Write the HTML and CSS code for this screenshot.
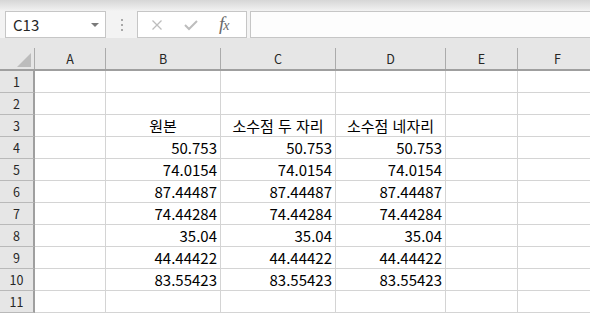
FILE: index.html
```html
<!DOCTYPE html>
<html lang="ko">
<head>
  <meta charset="UTF-8">
  <title>Sheet1</title>
  <link rel="stylesheet" href="styles.css">
</head>
<body>

  <!-- FORMULA BAR -->
  <div class="toolbar">
    <div class="name-box">
      <span>C13</span>
      <span class="drop"></span>
    </div>
    <div class="grip"><i></i><i></i><i></i></div>
    <div class="fx-box">
      <svg class="btn" width="12" height="12" viewBox="0 0 12 12"><path d="M1.5 1.5 L10.5 10.5 M10.5 1.5 L1.5 10.5" stroke="#bdbdbd" stroke-width="1.3" fill="none"/></svg>
      <svg class="btn" width="14" height="12" viewBox="0 0 14 12"><path d="M1 6 L5 10 L13 2" stroke="#bdbdbd" stroke-width="2" fill="none"/></svg>
      <span class="fx">f<small>x</small></span>
    </div>
    <div class="formula"></div>
  </div>

  <!-- SHEET -->
  <div class="sheet">
    <div class="head">
      <div class="corner"><span class="tri"></span></div>
      <div class="col">A</div>
      <div class="col">B</div>
      <div class="col">C</div>
      <div class="col">D</div>
      <div class="col">E</div>
      <div class="col">F</div>
    </div>

    <div class="row"><div class="rh">1</div><div class="c"></div><div class="c"></div><div class="c"></div><div class="c"></div><div class="c"></div><div class="c"></div></div>
    <div class="row"><div class="rh">2</div><div class="c"></div><div class="c"></div><div class="c"></div><div class="c"></div><div class="c"></div><div class="c"></div></div>
    <div class="row"><div class="rh">3</div><div class="c"></div><div class="c mid">원본</div><div class="c mid">소수점 두 자리</div><div class="c mid">소수점 네자리</div><div class="c"></div><div class="c"></div></div>
    <div class="row"><div class="rh">4</div><div class="c"></div><div class="c">50.753</div><div class="c">50.753</div><div class="c">50.753</div><div class="c"></div><div class="c"></div></div>
    <div class="row"><div class="rh">5</div><div class="c"></div><div class="c">74.0154</div><div class="c">74.0154</div><div class="c">74.0154</div><div class="c"></div><div class="c"></div></div>
    <div class="row"><div class="rh">6</div><div class="c"></div><div class="c">87.44487</div><div class="c">87.44487</div><div class="c">87.44487</div><div class="c"></div><div class="c"></div></div>
    <div class="row"><div class="rh">7</div><div class="c"></div><div class="c">74.44284</div><div class="c">74.44284</div><div class="c">74.44284</div><div class="c"></div><div class="c"></div></div>
    <div class="row"><div class="rh">8</div><div class="c"></div><div class="c">35.04</div><div class="c">35.04</div><div class="c">35.04</div><div class="c"></div><div class="c"></div></div>
    <div class="row"><div class="rh">9</div><div class="c"></div><div class="c">44.44422</div><div class="c">44.44422</div><div class="c">44.44422</div><div class="c"></div><div class="c"></div></div>
    <div class="row"><div class="rh">10</div><div class="c"></div><div class="c">83.55423</div><div class="c">83.55423</div><div class="c">83.55423</div><div class="c"></div><div class="c"></div></div>
    <div class="row"><div class="rh">11</div><div class="c"></div><div class="c"></div><div class="c"></div><div class="c"></div><div class="c"></div><div class="c"></div></div>
  </div>

</body>
</html>
```

FILE: styles.css
```css
body {
  margin: 0;
  padding: 0;
  width: 590px;
  height: 313px;
  overflow: hidden;
  background: #ffffff;
  font-family: "Noto Sans CJK KR", "Noto Sans", sans-serif;
  color: #000;
}

/* formula bar */
.toolbar {
  display: flex;
  height: 38px;
  box-sizing: border-box;
  padding: 11px 0 0 5px;
  background: linear-gradient(#d6d6d6 0, #ededed 9px, #f3f3f3 11px);
}

.name-box {
  width: 101px;
  height: 27px;
  box-sizing: border-box;
  border: 1px solid #c6c6c6;
  background: #fff;
  display: flex;
  align-items: center;
  justify-content: space-between;
  padding: 0 6px 0 7px;
  font-size: 15px;
  color: #262626;
}

.drop {
  width: 0;
  height: 0;
  border-left: 4px solid transparent;
  border-right: 4px solid transparent;
  border-top: 4px solid #7a7a7a;
}

.grip {
  width: 31px;
  display: flex;
  flex-direction: column;
  align-items: center;
  justify-content: center;
  gap: 3px;
}

.grip i {
  width: 2px;
  height: 2px;
  background: #a8a8a8;
}

.fx-box {
  width: 110px;
  height: 27px;
  box-sizing: border-box;
  border: 1px solid #c6c6c6;
  background: #fff;
  display: flex;
  align-items: center;
  padding-left: 13px;
  gap: 21px;
}

.fx {
  font-family: "Liberation Serif", serif;
  font-style: italic;
  font-size: 19px;
  line-height: 19px;
  color: #6a6a6a;
  letter-spacing: -1px;
}

.fx small {
  font-size: 14px;
}

.formula {
  flex: 1;
  height: 27px;
  box-sizing: border-box;
  margin-left: 3px;
  margin-right: -4px;
  border: 1px solid #c6c6c6;
  background: #fdfdfd;
}

/* grid */
.head, .row {
  display: grid;
  grid-template-columns: 35px 71px 115px 115px 110px 72px 80px;
}

.head {
  background: #e6e6e6;
  padding-top: 10px;
  border-bottom: 2px solid #9f9f9f;
}

.corner {
  height: 21px;
  box-sizing: border-box;
  border-right: 1px solid #ababab;
  display: flex;
  align-items: flex-end;
  justify-content: flex-end;
  padding: 0 3px 2px 0;
}

.tri {
  width: 0;
  height: 0;
  border-left: 14px solid transparent;
  border-bottom: 14px solid #bcbcbc;
}

.col {
  height: 21px;
  border-right: 1px solid #ababab;
  display: flex;
  align-items: center;
  justify-content: center;
  font-size: 12.5px;
  color: #262626;
}

.rh {
  background: #e6e6e6;
  border-right: 2px solid #9f9f9f;
  border-bottom: 1px solid #b9b9b9;
  display: flex;
  align-items: center;
  justify-content: center;
  font-size: 12.5px;
  color: #262626;
}

.c {
  height: 21px;
  box-sizing: border-box;
  height: 22px;
  border-right: 1px solid #d4d4d4;
  border-bottom: 1px solid #d4d4d4;
  display: flex;
  align-items: flex-end;
  justify-content: flex-end;
  padding: 0 3px 1px 0;
  font-size: 15px;
  line-height: 19px;
  white-space: nowrap;
}

.c.mid {
  justify-content: center;
  padding: 0 0 1px;
}
```
